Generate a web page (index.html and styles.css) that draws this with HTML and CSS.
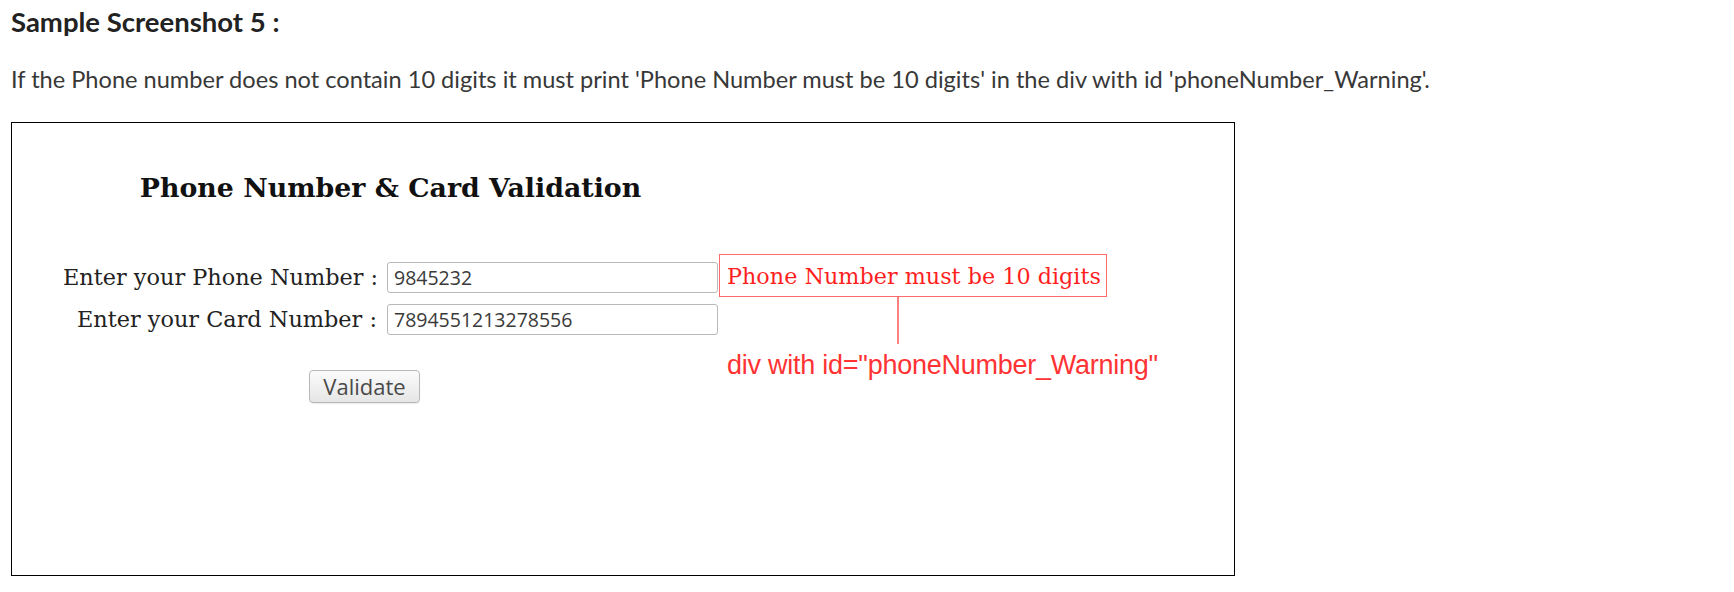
FILE: index.html
```html
<!DOCTYPE html>
<html>
<head>
<meta charset="utf-8">
<link rel="stylesheet" href="styles.css">
</head>
<body>
<h2 class="page-title">Sample Screenshot 5 :</h2>
<p class="page-desc">If the Phone number does not contain 10 digits it must print 'Phone Number must be 10 digits' in the div with id 'phoneNumber_Warning'.</p>
<div class="frame">
  <div class="panel">
    <h3 class="form-title">Phone Number &amp; Card Validation</h3>
    <div class="form-grid">
      <label class="label">Enter your Phone Number :</label>
      <input class="field" type="text" value="9845232">
      <div class="warning">Phone Number must be 10 digits
        <span class="callout-line"></span>
        <span class="callout-text">div with id="phoneNumber_Warning"</span>
      </div>
      <label class="label">Enter your Card Number :</label>
      <input class="field" type="text" value="7894551213278556">
    </div>
    <button class="validate" type="button">Validate</button>
  </div>
</div>
</body>
</html>
```

FILE: styles.css
```css
html, body {
  margin: 0;
  padding: 0;
  background: #fff;
}
body {
  padding: 6px 11px 0 11px;
  font-family: Lato, "Liberation Sans", sans-serif;
}
.page-title {
  margin: 0;
  font-family: Lato, sans-serif;
  font-weight: 700;
  font-size: 27.5px;
  line-height: 32px;
  color: #222;
}
.page-desc {
  margin: 27px 0 0 0;
  font-family: Lato, sans-serif;
  font-weight: 400;
  font-size: 23.6px;
  line-height: 28px;
  color: #383838;
}
.frame {
  margin-top: 29px;
  box-sizing: border-box;
  width: 1224px;
  height: 454px;
  border: 1px solid #000;
  padding: 50px 0 0 51px;
}
.panel {
  width: 655px;
}
.form-title {
  margin: 0;
  text-align: center;
  font-family: "DejaVu Serif", serif;
  font-weight: 700;
  font-size: 26.8px;
  line-height: 30px;
  color: #111;
}
.form-grid {
  margin-top: 59px;
  display: grid;
  grid-template-columns: 324px 331px auto;
  row-gap: 11px;
  align-items: center;
}
.label {
  padding-right: 10px;
  text-align: right;
  font-family: "DejaVu Serif", serif;
  font-size: 22.4px;
  line-height: 31px;
  color: #222;
  white-space: nowrap;
}
.field {
  box-sizing: border-box;
  width: 331px;
  height: 31px;
  margin: 0;
  padding: 0 6px;
  border: 1px solid #b9b9b9;
  border-radius: 3px;
  font-family: "Open Sans", sans-serif;
  font-size: 19.5px;
  color: #3a3a3a;
  background: #fff;
}
.warning {
  position: relative;
  box-sizing: border-box;
  width: 388px;
  height: 43px;
  margin: -8px 0 -4px 1px;
  padding: 2px 0 0 7px;
  border: 1px solid #ff6b6b;
  font-family: "DejaVu Serif", serif;
  font-size: 22.3px;
  line-height: 39px;
  color: #ff1f1f;
  white-space: nowrap;
}
.callout-line {
  position: absolute;
  left: 177px;
  top: calc(100% + 1px);
  width: 2px;
  height: 47px;
  background: #ff8080;
}
.callout-text {
  position: absolute;
  left: 7px;
  top: 95px;
  font-family: "Liberation Sans", Arial, sans-serif;
  font-size: 27px;
  line-height: 31px;
  letter-spacing: -0.25px;
  color: #ff3333;
  white-space: nowrap;
}
.validate {
  display: block;
  margin: 35px 0 0 246px;
  box-sizing: border-box;
  width: 111px;
  height: 33px;
  padding: 0;
  border: 1px solid #b8b8b8;
  border-radius: 4px;
  background: linear-gradient(#fbfbfb, #e6e6e6);
  box-shadow: 0 1px 1px rgba(0,0,0,0.08);
  font-family: "Open Sans", sans-serif;
  font-size: 22px;
  line-height: 29px;
  color: #4a4a4a;
}
```
